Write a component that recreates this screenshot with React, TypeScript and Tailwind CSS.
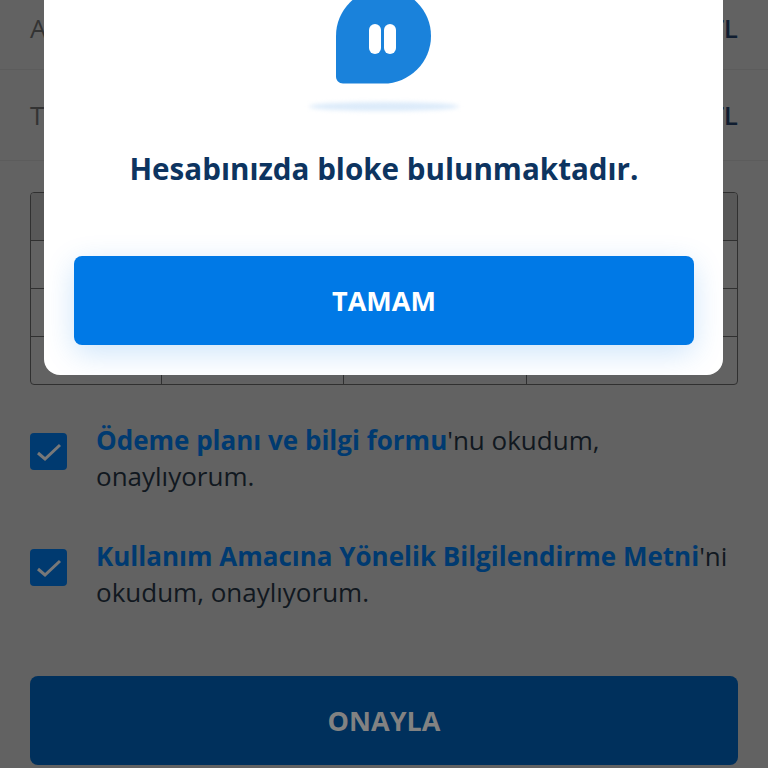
const rows = [0, 1, 2, 3];
const cols = ['w-[130px]', 'w-[182px]', 'w-[183px]', 'flex-1'];

function Check() {
  return (
    <div className="w-[37px] h-[37px] shrink-0 mt-[10px] rounded-[4px] bg-[#003a70] flex items-center justify-center">
      <svg width="26" height="20" viewBox="0 0 26 20" fill="none">
        <path d="M2 11l7 6L24 3" stroke="#787878" strokeWidth="3" />
      </svg>
    </div>
  );
}

export default function App() {
  return (
    <div className="relative h-[768px] overflow-hidden bg-[#626262] font-['Open_Sans',sans-serif]">
      <div className="flex flex-col">
        <div className="h-[70px] pb-[23px] px-[30px] flex items-end justify-between border-b border-[#5c5c5c] text-[26px] leading-[36px] text-[#333333]">
          <span>Anapara</span>
          <span className="font-semibold text-[#101d30]">1.000,00 TL</span>
        </div>
        <div className="h-[91px] px-[30px] flex items-center justify-between border-b border-[#5c5c5c] text-[26px] text-[#333333]">
          <span>Taksit</span>
          <span className="font-semibold text-[#101d30]">1.000,00 TL</span>
        </div>

        <div className="mt-[31px] mx-[30px] h-[193px] border border-[#303030] rounded-[4px] flex flex-col overflow-hidden">
          {rows.map((r) => (
            <div key={r} className={`flex-1 flex ${r > 0 ? 'border-t border-[#303030]' : 'bg-[#585858]'}`}>
              {cols.map((c, i) => (
                <div key={i} className={`${c} ${i > 0 ? 'border-l border-[#303030]' : ''}`} />
              ))}
            </div>
          ))}
        </div>

        <div className="mt-[38px] mx-[30px] flex items-start gap-[29px]">
          <Check />
          <p className="text-[26px] leading-[35.5px] text-[#111820]">
            <span className="font-bold text-[#003a70]">Ödeme planı ve bilgi formu</span>'nu okudum, onaylıyorum.
          </p>
        </div>
        <div className="mt-[45px] mx-[30px] flex items-start gap-[29px]">
          <Check />
          <p className="text-[26px] leading-[35.5px] text-[#111820]">
            <span className="font-bold text-[#003a70]">Kullanım Amacına Yönelik Bilgilendirme Metni</span>'ni okudum, onaylıyorum.
          </p>
        </div>

        <button className="mt-[66px] mx-[30px] h-[89px] pt-[2px] rounded-[8px] bg-[#00305c] text-[27px] font-bold text-[#828282]">
          ONAYLA
        </button>
      </div>

      <div className="absolute top-0 left-[44px] w-[679px] h-[375px] bg-white rounded-b-[16px] flex flex-col items-center pl-[30px] pr-[29px]">
        <svg width="96" height="84" viewBox="0 0 96 84" className="shrink-0">
          <path d="M0 36A47.5 47.5 0 0 1 95 36A47.5 47.5 0 0 1 47.5 83.5H7C3 83.5 0 80.5 0 76.5Z" fill="#1a82db" />
          <rect x="33" y="24" width="12" height="30" rx="6" fill="white" />
          <rect x="48" y="24" width="12" height="30" rx="6" fill="white" />
        </svg>
        <div className="mt-[18px] w-[150px] h-[9px] shrink-0 rounded-[50%] bg-[#dcebfa] blur-[2px]" />
        <h1 className="mt-[38px] text-[29.6px] leading-[40px] font-bold text-[#0d3460] whitespace-nowrap">
          Hesabınızda bloke bulunmaktadır.
        </h1>
        <button className="mt-[67px] w-full h-[89px] pt-[2px] shrink-0 rounded-[8px] bg-[#0079e6] text-[27px] font-bold text-white shadow-[0_8px_30px_rgba(0,121,230,0.2)]">
          TAMAM
        </button>
      </div>
    </div>
  );
}
